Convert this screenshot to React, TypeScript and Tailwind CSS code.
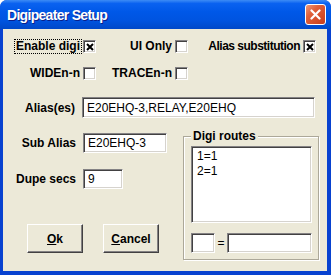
import React from "react";

const sunken =
  "bg-white border border-t-[#848284] border-l-[#848284] border-r-white border-b-white shadow-[inset_1px_1px_0_#424142,inset_-1px_-1px_0_#d6d3ce]";

const raised =
  "bg-[#ece9d8] border border-t-white border-l-white border-r-[#424142] border-b-[#424142] shadow-[inset_-1px_-1px_0_#848284]";

function Check({ checked }: { checked?: boolean }) {
  return (
    <div className={`w-[13px] h-[13px] shrink-0 flex items-center justify-center ${sunken}`}>
      {checked && (
        <svg width="8" height="8" viewBox="0 0 8 8">
          <path d="M1 1 L7 7 M7 1 L1 7" stroke="#000" strokeWidth="2" />
        </svg>
      )}
    </div>
  );
}

function Option({
  label,
  checked,
  width,
  focused,
  tight,
}: {
  label: string;
  checked?: boolean;
  width: string;
  focused?: boolean;
  tight?: boolean;
}) {
  return (
    <div className={`${width} flex items-center justify-end gap-[2px] shrink-0`}>
      <span
        className={`leading-[13px] px-[1px] ${tight ? "tracking-[-0.5px]" : ""} ${
          focused ? "outline outline-1 outline-dotted outline-black" : ""
        }`}
      >
        {label}
      </span>
      <Check checked={checked} />
    </div>
  );
}

export default function App() {
  return (
    <div className="w-[331px] h-[275px] flex flex-col bg-[#0842d0] rounded-t-[7px] overflow-hidden font-['Liberation_Sans',Arial,sans-serif] text-[12px] text-black">
      {/* title bar */}
      <div className="h-[29px] shrink-0 flex items-center justify-between pl-[7px] pr-[5px] bg-[linear-gradient(to_bottom,#3d8cf5_0%,#0a62f0_12%,#0058e8_40%,#0054e0_70%,#0048c8_100%)]">
        <span className="text-white font-bold text-[14px] tracking-[-0.7px] pt-[1px] [text-shadow:1px_1px_0_#0a1e8a]">
          Digipeater Setup
        </span>
        <div className="w-[21px] h-[21px] rounded-[3px] border border-white flex items-center justify-center bg-[linear-gradient(135deg,#ec9a7a_0%,#e0603a_35%,#c83c1a_100%)]">
          <svg width="11" height="11" viewBox="0 0 11 11">
            <path d="M1.5 1.5 L9.5 9.5 M9.5 1.5 L1.5 9.5" stroke="#fff" strokeWidth="2.2" strokeLinecap="round" />
          </svg>
        </div>
      </div>

      {/* dialog body */}
      <div className="flex-1 ml-[3px] mr-[4px] mb-[4px] bg-[#ece9d8] flex flex-col font-bold">
        <div className="flex mt-[11px] h-[13px] pl-[12px]">
          <Option label="Enable digi" checked focused width="w-[81px]" />
          <Option label="UI Only" width="w-[92px]" />
          <Option label="Alias substitution" checked tight width="w-[128px]" />
        </div>

        <div className="flex mt-[14px] h-[13px] pl-[12px]">
          <Option label="WIDEn-n" width="w-[81px]" />
          <Option label="TRACEn-n" width="w-[92px]" />
        </div>

        <div className="flex items-center mt-[17px] h-[21px]">
          <span className="w-[72px] text-right">Alias(es)</span>
          <div className={`ml-[7px] w-[233px] h-[21px] flex items-center pl-[4px] font-normal ${sunken}`}>
            E20EHQ-3,RELAY,E20EHQ
          </div>
        </div>

        <div className="flex mt-[11px]">
          <div className="w-[180px] flex flex-col">
            <div className="flex items-center mt-[4px] h-[20px]">
              <span className="w-[73px] text-right">Sub Alias</span>
              <div className={`ml-[7px] w-[84px] h-[20px] flex items-center pl-[4px] font-normal ${sunken}`}>
                E20EHQ-3
              </div>
            </div>
            <div className="flex items-center mt-[16px] h-[20px]">
              <span className="w-[73px] text-right">Dupe secs</span>
              <div className={`ml-[7px] w-[40px] h-[20px] flex items-center pl-[4px] font-normal ${sunken}`}>
                9
              </div>
            </div>
            <div className="flex mt-[35px] ml-[24px] gap-[20px]">
              <button className={`w-[56px] h-[29px] flex items-center justify-center ${raised}`}>
                <span>
                  <u>O</u>k
                </span>
              </button>
              <button className={`w-[56px] h-[29px] flex items-center justify-center ${raised}`}>
                <span>
                  <u>C</u>ancel
                </span>
              </button>
            </div>
          </div>

          <fieldset className="w-[136px] h-[131px] border border-[#aca899] shadow-[inset_1px_1px_0_#fff,1px_1px_0_#fff] pl-[7px] pr-[5px] pt-[3px]">
            <legend className="px-[2px] leading-[14px] bg-[#ece9d8]">Digi routes</legend>
            <div className={`w-[121px] h-[77px] pl-[5px] pt-[2px] font-normal leading-[15px] ${sunken}`}>
              <div>1=1</div>
              <div>2=1</div>
            </div>
            <div className="flex items-center mt-[10px] font-normal">
              <div className={`w-[24px] h-[20px] ${sunken}`} />
              <span className="w-[12px] text-center">=</span>
              <div className={`w-[85px] h-[20px] ${sunken}`} />
            </div>
          </fieldset>
        </div>
      </div>
    </div>
  );
}
